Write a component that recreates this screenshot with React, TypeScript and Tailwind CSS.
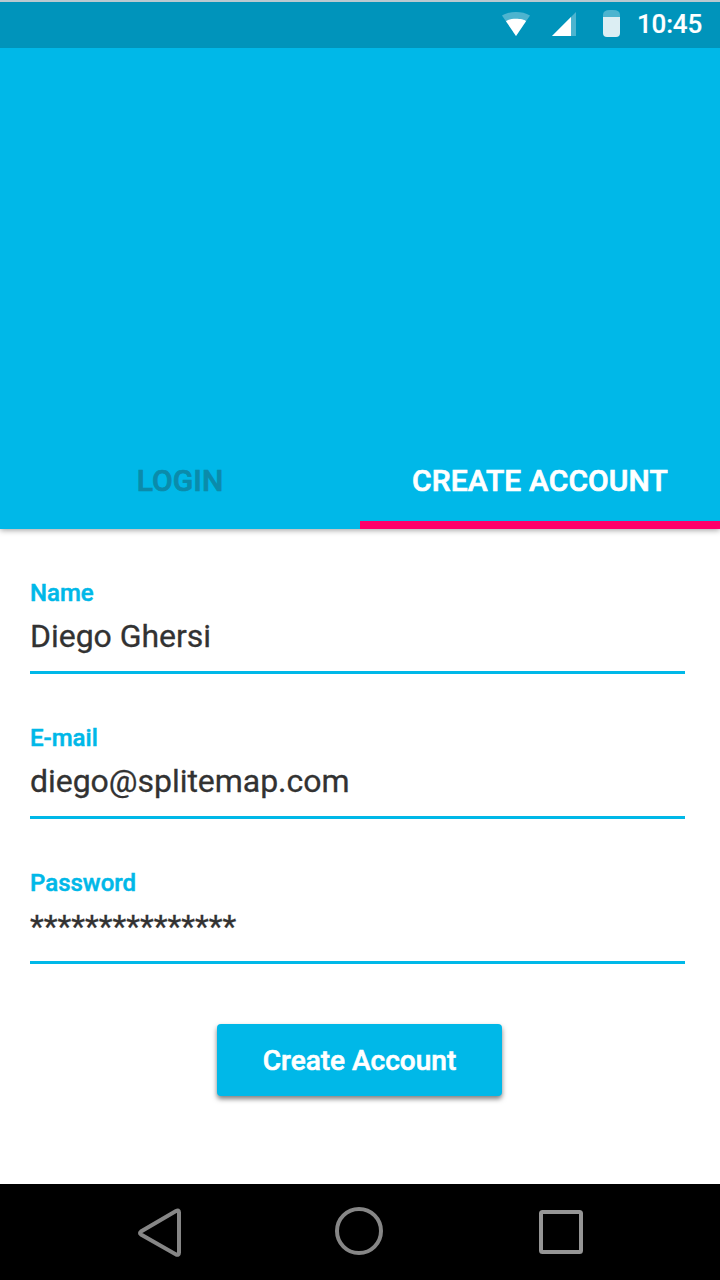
type FieldProps = { label: string; value: string };

function Field({ label, value }: FieldProps) {
  return (
    <div className="h-[145px] w-[655px]">
      <div className="flex h-[95px] flex-col border-b-[3px] border-[#00b8e8]">
        <span className="h-[28px] text-[24px] leading-[28px] font-medium text-[#00b8e8] [-webkit-text-stroke:0.5px_currentColor]">{label}</span>
        <span className="mt-[10px] text-[32px] leading-[39px] tracking-[-0.04px] text-[#323232] [-webkit-text-stroke:0.3px_currentColor]">{value}</span>
      </div>
    </div>
  );
}

function StatusBar() {
  return (
    <div className="relative z-10 flex h-[48px] shrink-0 border-t-2 border-[#b9c9d0] bg-[#0094bb] pl-[502px] text-white">
      <svg className="mt-[8px] h-[28px] w-[120px] shrink-0" viewBox="0 0 120 28">
        <path d="M0 5.5C8 .9 20 .9 28 5.5L14 26Z" fill="#4db4cf" />
        <path d="M4 11.2C7 8 21 8 24 11.2L14 26Z" fill="#fff" />
        <path d="M50 26L74 2V26Z" fill="#4db4cf" />
        <path d="M50 26L69 7V26Z" fill="#fff" />
        <path d="M101 7V5Q101 0 108 0H111Q118 0 118 5V7Z" fill="#4db4cf" />
        <path d="M101 7H118V23Q118 27 114 27H105Q101 27 101 23Z" fill="#dceef3" />
      </svg>
      <span className="mt-[7px] ml-[15px] text-[26px] leading-[30px] font-medium tracking-[-0.2px] [-webkit-text-stroke:0.15px_currentColor]">10:45</span>
    </div>
  );
}

export default function App() {
  return (
    <div className="flex h-[1280px] w-[720px] flex-col overflow-hidden bg-white font-['Roboto',sans-serif]">
      <StatusBar />
      <header className="flex h-[481px] shrink-0 flex-col justify-end bg-[#00b8e8] shadow-[0_1px_6px_rgba(0,0,0,0.4)]">
        <nav className="grid h-[96px] grid-cols-2 text-center text-[30px] leading-[36px] font-medium tracking-[0.1px] [-webkit-text-stroke:0.7px_currentColor]">
          <button className="text-[#0b8bab]">LOGIN</button>
          <button className="border-b-8 border-[#ff006a] pt-[8px] text-white">CREATE ACCOUNT</button>
        </nav>
      </header>
      <main className="flex flex-1 flex-col pt-[50px] pl-[30px]">
        <Field label="Name" value="Diego Ghersi" />
        <Field label="E-mail" value="diego@splitemap.com" />
        <Field label="Password" value="***************" />
        <button className="mt-[10px] ml-[187px] h-[72px] w-[285px] rounded-[4px] bg-[#00b8e8] pt-[1px] text-[28px] leading-[35px] font-medium text-white shadow-[0_3px_5px_rgba(0,0,0,0.5)] [-webkit-text-stroke:0.6px_currentColor]">
          Create Account
        </button>
      </main>
      <footer className="h-[96px] shrink-0 bg-black">
        <svg className="h-full w-full" viewBox="0 0 720 96" fill="none" stroke="#868686" strokeWidth="4">
          <path d="M179 28.5V68.5Q179 71.5 176 70.5L141 50.5Q139 49 141 47.5L176 27Q179 25.5 179 28.5Z" />
          <circle cx="359" cy="47" r="22" />
          <rect x="541" y="28" width="40" height="40" rx="1.5" stroke="#959595" />
        </svg>
      </footer>
    </div>
  );
}
